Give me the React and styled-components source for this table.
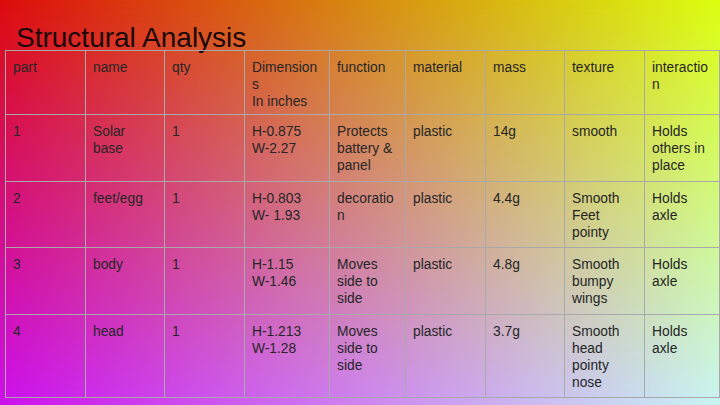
import React from "react";
import styled, { createGlobalStyle } from "styled-components";

const GlobalStyle = createGlobalStyle`
    html, body {
        margin: 0;
        padding: 0;
    }
    body {
        font-family: "Liberation Sans", Arial, sans-serif;
    }
`;

const columns = [
    { label: "part", width: 80 },
    { label: "name", width: 79 },
    { label: "qty", width: 80 },
    { label: "Dimension\ns\nIn inches", width: 85 },
    { label: "function", width: 76 },
    { label: "material", width: 80 },
    { label: "mass", width: 79 },
    { label: "texture", width: 80 },
    { label: "interactio\nn", width: 75 },
];

const rows = [
    { height: 67, cells: ["1", "Solar\nbase", "1", "H-0.875\nW-2.27", "Protects\nbattery &\npanel", "plastic", "14g", "smooth", "Holds\nothers in\nplace"] },
    { height: 66, cells: ["2", "feet/egg", "1", "H-0.803\nW- 1.93", "decoratio\nn", "plastic", "4.4g", "Smooth\nFeet\npointy", "Holds\naxle"] },
    { height: 67, cells: ["3", "body", "1", "H-1.15\nW-1.46", "Moves\nside to\nside", "plastic", "4.8g", "Smooth\nbumpy\nwings", "Holds\naxle"] },
    { height: 83, cells: ["4", "head", "1", "H-1.213\nW-1.28", "Moves\nside to\nside", "plastic", "3.7g", "Smooth\nhead\npointy\nnose", "Holds\naxle"] },
];

export default function App() {
    return (
        <>
            <GlobalStyle />
            <Slide>
                <Title>Structural Analysis</Title>
                <Table>
                    <colgroup>
                        {columns.map((c, i) => (
                            <col key={i} width={c.width} />
                        ))}
                    </colgroup>
                    <tbody>
                        <Row $height={64}>
                            {columns.map((c, i) => (
                                <Cell key={i}>{c.label}</Cell>
                            ))}
                        </Row>
                        {rows.map((r, i) => (
                            <Row key={i} $height={r.height}>
                                {r.cells.map((text, j) => (
                                    <Cell key={j}>{text}</Cell>
                                ))}
                            </Row>
                        ))}
                    </tbody>
                </Table>
            </Slide>
        </>
    );
}

const Slide = styled.div`
    position: relative;
    width: 720px;
    height: 405px;
    overflow: hidden;
    display: flex;
    flex-direction: column;
    padding-top: 22px;
    box-sizing: border-box;
    background: linear-gradient(to right, #dd0c0c 0%, #d88a10 50%, #dcff10 100%);
    isolation: isolate;

    &::before {
        content: "";
        position: absolute;
        inset: 0;
        z-index: -1;
        background: linear-gradient(to right, #cc10ee 0%, #cd84f2 50%, #c8f4f4 100%);
        -webkit-mask-image: linear-gradient(to bottom, transparent 0%, #000 100%);
        mask-image: linear-gradient(to bottom, transparent 0%, #000 100%);
    }
`;

const Title = styled.h1`
    margin: 0 0 -4px 0;
    padding-left: 16px;
    font-family: "Liberation Sans", Arial, sans-serif;
    font-size: 28px;
    font-weight: 400;
    line-height: 32px;
    color: #1a0808;
    white-space: nowrap;
`;

const Table = styled.table`
    margin-left: 5px;
    width: 714px;
    table-layout: fixed;
    border-collapse: collapse;
`;

const Row = styled.tr`
    height: ${(p) => p.$height}px;
`;

const Cell = styled.td`
    border: 1px solid #a9a9a9;
    padding: 8px 7px 2px;
    vertical-align: top;
    font-family: "Liberation Sans", Arial, sans-serif;
    font-size: 13.8px;
    line-height: 17px;
    color: #262626;
    white-space: pre-line;
`;
